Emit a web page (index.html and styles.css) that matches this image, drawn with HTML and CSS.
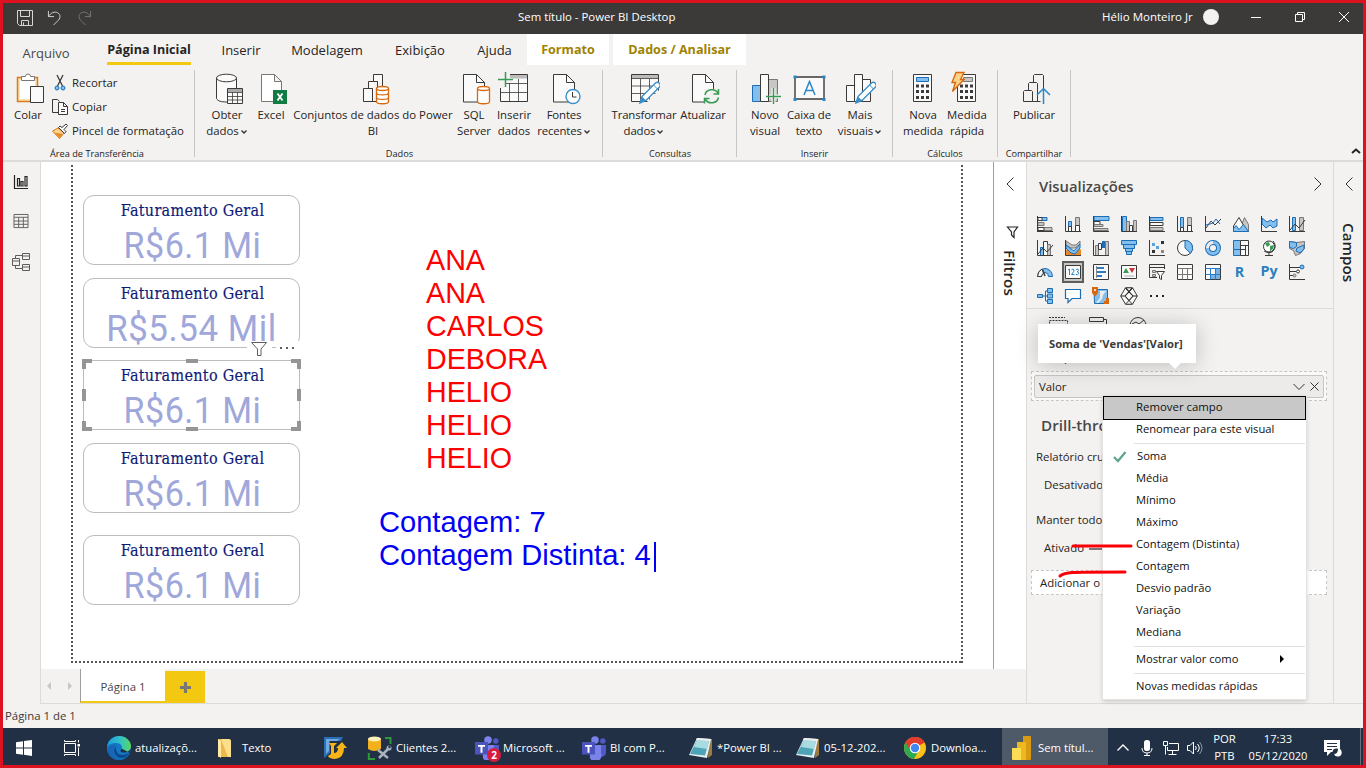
FILE: index.html
```html
<!DOCTYPE html>
<html lang="pt-BR">
<head>
<meta charset="utf-8">
<title>Sem título - Power BI Desktop</title>
<link rel="stylesheet" href="styles.css">
</head>
<body>
<svg class="defs" width="0" height="0">
  <symbol id="doc" viewBox="0 0 32 32"><path class="kw" d="M5.500 2.500h13l8 8v19.500h-21z"/><path class="k" d="M18.500 2.500v8h8"/></symbol>
  <symbol id="pencil" viewBox="0 0 32 32"><path d="M12 31l2-6.500L27.500 11q2-1.500 3.800.3t.2 3.800L18 28.500z" fill="#fff" stroke="#3a8fc8" stroke-width="1.400"/><path d="M12 31l2-6.500 4 4z" fill="#3a8fc8"/><path d="M25.500 13l4 4" stroke="#3a8fc8"/></symbol>
  <symbol id="chev" viewBox="0 0 8 6"><path d="M1.500 1.500L4 4l2.500-2.500" fill="none" stroke="#333" stroke-width="1.400"/></symbol>
  <symbol id="teams" viewBox="0 0 24 24"><circle cx="13" cy="4" r="3.800" fill="#7b83eb"/><circle cx="20.800" cy="5" r="2.700" fill="#5059c9"/><path d="M16 9h8v7.500a4 4 0 0 1-5 4z" fill="#5059c9"/><path d="M7 9h12v8a6 6 0 0 1-11 5z" fill="#7b83eb"/><path d="M0 6h13v12.500H0z" fill="#4b53bc"/><path d="M3 9h7v1.800H7.500v6h-2v-6H3z" fill="#fff"/></symbol>
  <symbol id="note" viewBox="0 0 24 24"><path d="M20 3h3v16l-4 3z" fill="#9c7b43"/><path d="M8 2l14 1-4 19-18-3z" fill="#e8f1f1"/><path d="M8 4l12 1-4 14.500L1 18z" fill="#4da4b6"/><path d="M8 4l12 1-2 8L5 11z" fill="#a9dce2"/><path d="M8 2l14 1-.3 2L7 4z" fill="#eee"/></symbol>
</svg>

<header class="titlebar">
  <svg class="tb-save" viewBox="0 0 16 16"><path class="w" d="M.5.500h15v15h-13l-2-2zM3.500.500v6h9v-6M4.500 15.500v-5h7v5M6.500 12.500v3"/></svg>
  <svg class="tb-undo" viewBox="0 0 16 16"><path class="w" d="M1.500.500v6h6M1.500 6.500C4 2.500 8 .5 11.500 2.500s3 6-.5 9l-4 4"/></svg>
  <svg class="tb-redo" viewBox="0 0 16 16"><path class="w" d="M14.500.500v6h-6M14.500 6.500C12 2.500 8 .5 4.500 2.500s-3 6 .5 9l4 4"/></svg>
  <span class="app-title">Sem título - Power BI Desktop</span>
  <span class="user">Hélio Monteiro Jr</span><span class="avatar"></span>
  <svg class="win" viewBox="0 0 10 10"><path class="w1" d="M0 5.500h10"/></svg>
  <svg class="win" viewBox="0 0 10 10"><path class="w1" d="M.5 2.500h7v7h-7zM2.500 2.500v-2h7v7h-2"/></svg>
  <svg class="win" viewBox="0 0 10 10"><path class="w1" d="M0 0l10 10M10 0L0 10"/></svg>
</header>

<nav class="tabs">
  <span class="tab file">Arquivo</span><span class="tab home">Página Inicial</span><span class="tab ins">Inserir</span><span class="tab mod">Modelagem</span><span class="tab exi">Exibição</span><span class="tab aju">Ajuda</span><span class="tab ctx fmt">Formato</span><span class="tab ctx ana">Dados / Analisar</span>
</nav>

<section class="ribbon">
  <div class="group g1">
    <div class="row">
      <div class="cmd c50"><svg viewBox="0 0 32 32"><path d="M5.500 5.500h20v24h-20z" fill="#fbe3b0" stroke="#d97b18" stroke-width="1.500"/><path d="M8 8h15v19H8z" fill="#fff"/><path d="M9.500 8.500v-4h4q0-2.500 2.500-2.500t2.500 2.500h4v4z" fill="#fff" stroke="#797775"/><path class="kw" d="M18.500 14.500h13v16h-13z"/></svg><span>Colar</span></div>
      <div class="small">
        <div><svg viewBox="0 0 16 16"><path class="k" d="M5 0l5.500 11M11 0L5.500 11" stroke-width="1.300"/><circle cx="5" cy="13" r="2" class="bl"/><circle cx="11" cy="13" r="2" class="bl"/></svg><span>Recortar</span></div>
        <div><svg viewBox="0 0 16 16"><path class="k" d="M6 13.500H.5V.500h5l2 2"/><path class="kw" d="M6.500 3.500h5l4 4v8h-9zM11.500 3.500v4h4M9 10.500h4M9 12.500h4"/></svg><span>Copiar</span></div>
        <div><svg viewBox="0 0 16 16"><path d="M.5 8L6 5l6 5-4.500 5.500z" fill="#fdd28a" stroke="#d97b18"/><path d="M2 9.500l6 5.500 3-4z" fill="#e58a2c"/><path class="kw" d="M6.500 4.500l6 6 1.500-2-2-2 3.500-4-1.500-1.500-4 3.500-2-1.500z"/></svg><span>Pincel de formatação</span></div>
      </div>
    </div>
    <div class="glabel">Área de Transferência</div>
  </div>
  <div class="group g2">
    <div class="row">
      <div class="cmd c44"><svg viewBox="0 0 32 32"><path class="kw" d="M5.500 6v20.500c1 2.500 5 3.500 10 3.500s10-1 10-3.500V6"/><ellipse class="kw" cx="15.500" cy="6" rx="10" ry="3.800"/><path class="kw" d="M16.500 16.500h15v15h-15z"/><path d="M17 17h14v3H17z" fill="#aaa"/><path class="k" d="M16.500 20.500h15M16.500 24.500h15M16.500 28h15M21.500 20v11M26.500 20v11" stroke-width=".8"/></svg><span>Obter<br>dados<svg class="chev"><use href="#chev"/></svg></span></div>
      <div class="cmd c44"><svg viewBox="0 0 32 32"><path d="M6.500 2.500h13l7 7v20h-20zM19.500 2.500v7h7" fill="#fff" stroke="#797775"/><path d="M18 18h14v14H18z" fill="#107c41"/><path d="M22.500 21.500l5 7M27.500 21.500l-5 7" stroke="#fff" stroke-width="1.800"/></svg><span>Excel</span></div>
      <div class="cmd c160"><svg viewBox="0 0 32 32"><path class="kw" d="M16.500 2.500h9v27h-9z"/><path class="kw" d="M11.500 9.500h9v20h-9z"/><path d="M17 10h9v19h-9z" fill="#f3f2f1"/><path class="k" d="M20.500 9.500v7M25.500 9.500v6"/><path class="kw" d="M6.500 16.500h9v13h-9z"/><path d="M19.500 16.500v13c0 3 12 3 12 0v-13" fill="#fff" stroke="#d9690c" stroke-width="1.300"/><ellipse cx="25.500" cy="16.500" rx="6" ry="2" fill="#fff" stroke="#d9690c" stroke-width="1.300"/><path d="M19.500 21c0 2.500 12 2.500 12 0M19.500 25.500c0 2.500 12 2.500 12 0" fill="none" stroke="#d9690c" stroke-width="1.300"/></svg><span>Conjuntos de dados do Power<br>BI</span></div>
      <div class="cmd c42"><svg viewBox="0 0 32 32"><use href="#doc"/><path d="M19.500 16.500v13c0 3 12 3 12 0v-13" fill="#fff" stroke="#d9690c" stroke-width="1.300"/><ellipse cx="25.500" cy="16.500" rx="6" ry="2" fill="#fff" stroke="#d9690c" stroke-width="1.300"/></svg><span>SQL<br>Server</span></div>
      <div class="cmd c38"><svg viewBox="0 0 32 32"><path class="kw" d="M2.500 2.500h27v27h-27z"/><path d="M11 3h18v3.500H11z" fill="#bbb"/><path class="k" d="M2.500 11.500h27M2.500 20.500h27M11.500 7v22M20.500 7v22" stroke-width=".8"/><path d="M0 0h12v6h2v5h-6v5H0z" fill="#f3f2f1"/><path d="M0 7.500h15M7.500 0v15" stroke="#399b53" stroke-width="1.500"/></svg><span>Inserir<br>dados</span></div>
      <div class="cmd c62"><svg viewBox="0 0 32 32"><use href="#doc"/><circle cx="25" cy="24.500" r="7" fill="#fff" stroke="#3a8fc8" stroke-width="1.400"/><path class="k" d="M24.500 20v5h4"/></svg><span>Fontes<br>recentes<svg class="chev"><use href="#chev"/></svg></span></div>
    </div>
    <div class="glabel">Dados</div>
  </div>
  <div class="group g3">
    <div class="row">
      <div class="cmd c64"><svg viewBox="0 0 32 32"><path class="kw" d="M3.500 2.500h27v27h-27z"/><path d="M4 3h26v3.500H4z" fill="#bbb"/><path class="k" d="M3.500 6.500h27M3.500 14h27M3.500 21.500h27M12.500 7v22M21.500 7v22" stroke-width=".8"/><path d="M18 31L32 17v15z" fill="#f3f2f1"/><use href="#pencil"/></svg><span>Transformar<br>dados<svg class="chev"><use href="#chev"/></svg></span></div>
      <div class="cmd c54"><svg viewBox="0 0 32 32"><use href="#doc"/><path d="M17 17h15v15H17z" fill="#f3f2f1"/><path d="M18 23a7 6.500 0 0 1 13-2M31.500 17v5h-5M31.500 25.500a7 6.500 0 0 1-13 2M17.500 31.500v-5h5" fill="none" stroke="#399b53" stroke-width="1.500"/></svg><span>Atualizar</span></div>
    </div>
    <div class="glabel">Consultas</div>
  </div>
  <div class="group g4">
    <div class="row">
      <div class="cmd c40"><svg viewBox="0 0 32 32"><path d="M19.500 7.500h9v22h-9z" fill="#c8c6c4" stroke="#797775"/><path d="M3.500 13.500h8v16h-8z" class="bl"/><path class="kw" d="M11.500 2.500h8v27h-8z"/><path d="M20 24.500h12.500M24.500 16v16" stroke="#f3f2f1" stroke-width="4"/><path d="M17 24.500h15M24.500 16v16" stroke="#399b53" stroke-width="1.400"/></svg><span>Novo<br>visual</span></div>
      <div class="cmd c48"><svg viewBox="0 0 32 32"><path class="kw" d="M2 5h29v22H2z" stroke-width="1.400"/><path d="M.5 3.500h3v3h-3zM29.500 3.500h3v3h-3zM.5 26h3v3h-3zM29.500 26h3v3h-3z" fill="#2488cc"/><path d="M11 23L16.500 9.500 22 23M13 18.500h7" fill="none" stroke="#2b88c8" stroke-width="1.500"/></svg><span>Caixa de<br>texto</span></div>
      <div class="cmd c54"><svg viewBox="0 0 32 32"><path class="kw" d="M2.500 13.500h8v16h-8zM18.500 7.500h8v22h-8zM10.500 2.500h8v27h-8z"/><use href="#pencil"/></svg><span>Mais<br>visuais<svg class="chev"><use href="#chev"/></svg></span></div>
    </div>
    <div class="glabel">Inserir</div>
  </div>
  <div class="group g5">
    <div class="row">
      <div class="cmd c44"><svg viewBox="0 0 32 32"><path class="kw" d="M6.500 2.500h18v27h-18z"/><path class="bl" d="M9.500 5.500h12v4h-12z"/><path d="M9 14h13M9 19.500h13M9 25.500h13" stroke="#3b3a39" stroke-width="3" stroke-dasharray="3 2"/></svg><span>Nova<br>medida</span></div>
      <div class="cmd c44"><svg viewBox="0 0 32 32"><path class="kw" d="M6.500 2.500h18v27h-18z"/><path d="M12.500 5.500h9v4h-9z" fill="#c8c6c4" stroke="#797775"/><path d="M9 14h13M9 19.500h13M9 25.500h13" stroke="#3b3a39" stroke-width="3" stroke-dasharray="3 2"/><path d="M5 .5h8L9.500 7.500H13L1.500 19.500l3-9H1z" fill="#fdd28a" stroke="#d9690c" stroke-width="1.400"/></svg><span>Medida<br>rápida</span></div>
    </div>
    <div class="glabel">Cálculos</div>
  </div>
  <div class="group g6">
    <div class="row">
      <div class="cmd c48"><svg viewBox="0 0 32 32"><path class="k" d="M15.500 10v-6.500l1-1h8l1 1v13M10.500 18v-6.500l1-1h7l1 1v18M5.500 29.500v-10l1-1h7l1 1v10zM14.500 29.500h8"/><path d="M25.500 32V17M19 23l6.500-6.500L32 23" fill="none" stroke="#2b88c8" stroke-width="1.500"/></svg><span>Publicar</span></div>
    </div>
    <div class="glabel">Compartilhar</div>
  </div>
  <svg class="collapse" viewBox="0 0 10 6"><path d="M1 5l4-3.500L9 5" fill="none" stroke="#222" stroke-width="2"/></svg>
</section>

<main class="main">
  <aside class="views">
    <svg class="v1" viewBox="0 0 16 16"><path d="M1.500 1v13.500H15M4.500 12V4.500h2V12zM8 12V7.500h2V12zM12 12V2.500h2V12z" fill="none" stroke="#252423" stroke-width="1.200"/></svg>
    <svg class="v2" viewBox="0 0 16 16"><path d="M.5.500h15v14H.500zM.5 3.500h15M.5 7.500h15M.5 11h15M5.500 3.500v11M10.500 3.500v11" fill="none" stroke="#605e5c"/></svg>
    <svg class="v3" viewBox="0 0 18 18"><path d="M.5 5.500h7v7h-7zM.5 8h7M10.500.500h7v6h-7zM10.500 3h7M10.500 11.500h7v6h-7zM10.500 14h7M3.500 5.500v-3h7M3.500 12.500v3h7" fill="none" stroke="#605e5c"/></svg>
  </aside>
  <div class="center">
    <div class="work">
      <div class="canvas">
        <div class="page">
          <div class="cards">
            <article class="card"><h3>Faturamento Geral</h3><p>R$6.1 Mi</p></article>
            <article class="card"><h3>Faturamento Geral</h3><p class="long">R$5.54 Mil</p></article>
            <article class="card sel"><h3>Faturamento Geral</h3><p>R$6.1 Mi</p>
              <svg class="handles" viewBox="0 0 219 72"><path d="M2 10V2h8M209 2h8v8M217 62v8h-8M10 70H2v-8M104 2h12M104 70h12M2 30v12M217 30v12" fill="none" stroke="#979593" stroke-width="4"/></svg>
              <span class="act filt"><svg viewBox="0 0 16 14"><path d="M.5.500h15L10 7v6.500H6.500V7z" fill="#fff" stroke="#605e5c"/></svg></span>
              <span class="act more"><i></i><i></i><i></i></span>
            </article>
            <article class="card"><h3>Faturamento Geral</h3><p>R$6.1 Mi</p></article>
            <article class="card last"><h3>Faturamento Geral</h3><p>R$6.1 Mi</p></article>
          </div>
          <div class="notes">
            <div class="names">ANA<br>ANA<br>CARLOS<br>DEBORA<br>HELIO<br>HELIO<br>HELIO</div>
            <div class="counts">Contagem: 7<br>Contagem Distinta: 4<span class="caret"></span></div>
          </div>
        </div>
      </div>
      <aside class="filters">
        <svg class="ch" viewBox="0 0 8 14"><path d="M7.500.500L1 7l6.500 6.500" fill="none" stroke="#333"/></svg>
        <svg class="fun" viewBox="0 0 12 12"><path d="M.5 1h10L7 6v5.500L4.500 9V6z" fill="none" stroke="#252423" stroke-width="1.200"/></svg>
        <span>Filtros</span>
      </aside>
    </div>
    <div class="pages">
      <div class="arrows"><i class="al"></i><i class="ar"></i></div>
      <div class="ptab">Página 1</div>
      <div class="padd"><svg viewBox="0 0 12 12"><path d="M6 0v12M0 6h12" stroke="#797775" stroke-width="3.500"/></svg></div>
    </div>
  </div>
  <aside class="viz">
    <div class="vhead"><span>Visualizações</span><svg class="ch" viewBox="0 0 8 14"><path d="M.5.500L7 7 .5 13.500" fill="none" stroke="#333"/></svg></div>
    <div class="gallery">
      <svg viewBox="0 0 16 16"><path class="b" d="M1 1.500h9v3H1z"/><path class="wh" d="M1 1.500h4v3H1z"/><path class="g" d="M1 6.500h6v3H1zM1 11.500h14v3H1z"/><path class="wh" d="M1 11.500h6v3H1z"/><path class="k" d="M.5 0v16M0 15.500h16"/></svg>
      <svg viewBox="0 0 16 16"><path class="b" d="M3.500 5.500h3v6h-3z"/><path class="wh" d="M3.500 10.500h3v5h-3z"/><path class="g" d="M10.500 1.500h4v9h-4z"/><path class="wh" d="M10.500 9.500h4v6h-4z"/><path class="k" d="M.5 0v15.500H16"/></svg>
      <svg viewBox="0 0 16 16"><path class="b" d="M1 .5h15v4H1z"/><path class="wh" d="M1 5.500h6v3H1z"/><path class="g" d="M1 8.500h9v2H1zM1 12.500h14v2H1z"/><path class="k" d="M.5 0v15.500H16"/></svg>
      <svg viewBox="0 0 16 16"><path class="b" d="M1.500.500h4v15h-4z"/><path class="g" d="M5.500 5.500h3v10h-3z"/><path class="wh" d="M8.500 9.500h3v6h-3z"/><path class="g" d="M12.500 4.500h3v11h-3z"/><path class="k" d="M.5 0v15.500H16"/></svg>
      <svg viewBox="0 0 16 16"><path class="b" d="M1 1.500h13v3H1z"/><path class="wh" d="M1 6.500h13v3H1z"/><path class="g" d="M1 11.500h13v3H1z"/><path class="k" d="M.5 0v15.500H16"/></svg>
      <svg viewBox="0 0 16 16"><path class="b" d="M3.500 1.500h3v10h-3z"/><path class="wh" d="M3.500 11.500h3v4h-3z"/><path class="g" d="M10.500 1.500h4v9h-4z"/><path class="wh" d="M10.500 9.500h4v6h-4z"/><path class="k" d="M.5 0v15.500H16"/></svg>
      <svg viewBox="0 0 16 16"><path class="k" d="M.5 0v15.500H16M1 12l5-7 4 4 6-6"/><path d="M1 9l4-1 3-1 3-4 4 5" fill="none" stroke="#1b6db5"/></svg>
      <svg viewBox="0 0 16 16"><path class="g" d="M6 15.500l5.500-14 4 7v7z"/><path class="wh" d="M.5 10L6 1.500 12 12v3.500H.500z"/><path class="b" d="M.5 15.500v-3L3 9.500l3 4 4.500-5 5 7z"/></svg>
      <svg viewBox="0 0 16 16"><path class="b" d="M1 2l5 4 4-2 2 2 4-3v7l-4 2-3-3-4 3-4-4z"/><path class="k" d="M.5 0v15.500H16"/></svg>
      <svg viewBox="0 0 16 16"><path class="b" d="M3.500 1.500h3v13h-3z"/><path class="g" d="M10.500 1.500h4v13h-4z"/><path class="k" d="M.5 0v15.500H16M1 14l5-6 4 4 6-8"/></svg>

      <svg viewBox="0 0 16 16"><path class="b" d="M3.500 7.500h3v8h-3z"/><path class="wh" d="M6.500 1.500h4v14h-4z"/><path class="g" d="M10.500 4.500h3v11h-3z"/><path class="k" d="M.5 0v15.500H16M1 14l5-6 4 4 6-7"/></svg>
      <svg viewBox="0 0 16 16"><path d="M1 10l4-3 3 6 6-5 2 2v5H1z" fill="#e58a2c"/><path class="g" d="M1 1l6 4h4l4-4v3l-5 4H6L1 5z"/><path class="b" d="M1 5l5 4 3 2 6-7v4l-5 6-4-1-5-5z"/><path class="k" d="M.5 0v15.500H16"/></svg>
      <svg viewBox="0 0 16 16"><path class="g" d="M2.500 5.500h3v10h-3zM12.500 1.500h3v14h-3z"/><path class="wh" d="M5.500 3.500h3v6h-3z"/><path d="M9 1h3v7H9z" fill="#1b6db5"/><path class="k" d="M.5 0v15.500H16"/></svg>
      <svg viewBox="0 0 16 16"><path class="b" d="M.5.500h15v4h-15zM2.500 4.500h11v4h-11zM4.500 8.500h7v3h-7zM5.500 11.500h5v3h-5z"/></svg>
      <svg viewBox="0 0 16 16"><path class="k" d="M.5 0v15.500H16"/><path d="M3 10h3v3H3zM12 1h3v3h-3z" fill="#333"/><path d="M3 3h3v3H3zM7 6h3v3H7z" fill="#5ba3dc"/><path d="M12 10h3v3h-3z" fill="#888"/></svg>
      <svg viewBox="0 0 16 16"><circle class="wh" cx="8" cy="8" r="7.500"/><path class="b" d="M8 .5a7.500 7.500 0 0 1 5.500 12.800L8 8z"/></svg>
      <svg viewBox="0 0 16 16"><circle cx="8" cy="8" r="5.500" fill="none" stroke="#1b6db5" stroke-width="5"/><circle cx="8" cy="8" r="5.500" fill="none" stroke="#83beec" stroke-width="3"/><path d="M2.500 8A5.500 5.500 0 0 1 8 2.500" fill="none" stroke="#eee" stroke-width="3"/></svg>
      <svg viewBox="0 0 16 16"><path class="b" d="M.5.500h7v9h-7zM.5 9.500h7v6h-7z"/><path class="wh" d="M7.500.500h8v5h-8zM7.500 5.500h5v10h-5zM12.500 5.500h3v10h-3zM7.500 9.500h5"/></svg>
      <svg viewBox="0 0 16 16"><circle cx="8" cy="6.500" r="5.500" fill="#fff" stroke="#333"/><path d="M4 3l4-1 1 3-3 2zM9 6l4-1-1 4-3 2z" fill="#399b53"/><path class="k" d="M12 1q5 6-1 11-4 2-8-1M8 13v2.500M4 15.500h8"/></svg>
      <svg viewBox="0 0 16 16"><path class="g" d="M.5 1.500l7 1 8-1v7l-4 5-5 2-2-5-4-2z"/><path class="b" d="M.5 1.500l7 1v4l-3 2-4-1zM8 8l7-3v4l-4 4-4-2z"/></svg>

      <svg viewBox="0 0 16 16"><path class="b" d="M.5 12.500a7.500 8 0 0 1 15 0h-4a3.500 4 0 0 0-7 0z"/><path class="wh" d="M.5 12.500Q1 7 5 5l2 4q-2.500 1-2.500 3.500z"/><path class="k" d="M8 12L5.500 6" stroke-width="1.500"/></svg>
      <span class="on"><svg viewBox="0 0 16 16"><path class="wh" d="M.5 1.500h15v13H.500z"/><path d="M3 6l1.500-1v6M6.500 6q1.500-2 2.500 0 .5 1-2.500 4.500h3M11 5.500q2.500-1 2.500.8 0 1-1.500 1.400 2 .3 1.800 1.800-.8 1.800-3 1" fill="none" stroke="#2b88c8"/></svg></span>
      <svg viewBox="0 0 16 16"><path class="wh" d="M.5.500h15v15H.500z"/><path d="M4 4h7M4 8h9M4 12h5" stroke="#2b7cc4" stroke-width="2"/><path d="M3.500 2v12" stroke="#888"/></svg>
      <svg viewBox="0 0 16 16"><path class="wh" d="M.5 1.500h15v13H.500z"/><path d="M2 9l3-5 3 5z" fill="#399b53"/><path d="M8 4h6l-3 5z" fill="#d13438"/><path d="M3 12h10" stroke="#aaa"/></svg>
      <svg viewBox="0 0 16 16"><path class="k" d="M8 13.500H.500v-13h15V5M.5 3.500h15" stroke="#777"/><path class="g" d="M3.500 6.500h3v2h-3zM3.500 10.500h3v2h-3z"/><path class="kw" d="M7.500 7.500h8l-3 4v4l-2-1v-3z"/></svg>
      <svg viewBox="0 0 16 16"><path class="wh" d="M.5.500h15v15H.500z"/><path d="M.5 4.500h15M.5 10.500h15M5.500 4.500v11M10.500 4.500v11" stroke="#797775"/></svg>
      <svg viewBox="0 0 16 16"><path class="wh" d="M.5.500h15v15H.500z"/><path d="M5 10h5V4h5v11H5z" fill="#72b2e6"/><path d="M.5 4.500h15M.5 10.500h15M5.500 4.500v11M10.500 4.500v11" stroke="#2b7cc4"/></svg>
      <b class="ltr r">R</b>
      <b class="ltr">Py</b>
      <svg viewBox="0 0 16 16"><path class="k" d="M.5 0v15.500H16M1 3.500h10M1 7.500h6M1 11.500h3"/><circle class="b" cx="13" cy="3" r="2"/><circle class="wh" cx="9" cy="7.500" r="1.500"/><circle class="g" cx="5.500" cy="11.500" r="1.500"/></svg>

      <svg viewBox="0 0 16 16"><path d="M5 8h6M11 3H8.500v10H11" fill="none" stroke="#1b6db5"/><path class="b" d="M.5 6.500h5v3h-5zM10.500.500h5v4h-5zM10.500 6h5v4h-5zM10.500 11.500h5v4h-5z"/></svg>
      <svg viewBox="0 0 16 16"><path d="M.5 1.500h15v9H7l-4 4v-4H.500z" fill="#fff" stroke="#1b6db5" stroke-width="1.200"/></svg>
      <svg class="big" viewBox="0 0 18 18"><path class="b" d="M2 2.500h13.500v14H2.500z"/><path d="M8 4h6l-3 4-1 4-4 4H4l4-5z" fill="#eee"/><path d="M0 0h6v6l-3 3.500L0 6zM14 11h3v6h-5v-3h2z" fill="#d9690c"/><circle cx="3" cy="3" r="1" fill="#fff"/></svg>
      <svg class="big" viewBox="0 0 18 18"><path class="wh" d="M5.500.800L9 4.500 12.500.800 17.300 9l-4.800 8.200L9 13.500l-3.500 3.700L.7 9z"/><path d="M5.500.800L13 9l-4 4.500L5 9 12.500.800M5.500.800h7M5.500 17.200h7M5 9L.7 9M13 9l4.300 0" fill="none" stroke="#252423" stroke-width="1.100"/></svg>
      <span class="dots"><i></i><i></i><i></i></span>
    </div>
    <div class="panes">
      <svg viewBox="0 0 20 16"><path class="k" d="M0 .5h16M.5 3.500h18v12H.500z" stroke-dasharray="2 1"/></svg>
      <svg viewBox="0 0 20 16"><path class="k" d="M.5.500h14v4H.500zM14.500 2.500h3v5h-9v8"/></svg>
      <svg viewBox="0 0 20 16"><circle class="k" cx="9" cy="8.500" r="8"/><path class="k" d="M3 7l4-2 3 2 5-4"/></svg>
    </div>
    <div class="flabel">Campos</div>
    <div class="well"><div class="pill"><span>Valor</span><svg class="pc" viewBox="0 0 12 8"><path d="M.5 1L6 6.500 11.500 1" fill="none" stroke="#333"/></svg><svg class="px" viewBox="0 0 9 9"><path d="M.5.500l8 8M8.500.500l-8 8" stroke="#333"/></svg></div></div>
    <h2>Drill-thro</h2>
    <div class="line l1">Relatório cru</div>
    <div class="line l2">Desativado</div>
    <div class="line l3">Manter todo</div>
    <div class="line l4">Ativado<span class="toggle"></span></div>
    <div class="drop">Adicionar o</div>

    <div class="tip">Soma de 'Vendas'[Valor]</div>
    <div class="menu">
      <div class="hot">Remover campo</div>
      <div class="second">Renomear para este visual</div>
      <hr>
      <div class="chk"><svg viewBox="0 0 14 12"><path d="M1 6l4 4L12.500 1" fill="none" stroke="#5fa58c" stroke-width="2.200"/></svg>Soma</div>
      <div>Média</div><div>Mínimo</div><div>Máximo</div><div>Contagem (Distinta)</div><div>Contagem</div><div>Desvio padrão</div><div>Variação</div><div>Mediana</div>
      <hr>
      <div class="sub">Mostrar valor como<i></i></div>
      <hr>
      <div>Novas medidas rápidas</div>
    </div>
    <svg class="marks" viewBox="0 0 76 36"><path d="M15 6h58M2 36q4-3 12-3.500 8-.5 53-.500" fill="none" stroke="#fb0007" stroke-width="3" stroke-linecap="round"/></svg>
  </aside>
  <aside class="fields"><svg class="ch" viewBox="0 0 8 14"><path d="M7.500.500L1 7l6.500 6.500" fill="none" stroke="#333"/></svg><span>Campos</span></aside>
</main>

<footer class="status">Página 1 de 1</footer>

<div class="taskbar">
  <div class="ico start"><svg viewBox="0 0 16 16"><path d="M0 2.300L7 1.300V7.500H0zM8 1.100L16 0v7.500H8zM0 8.500h7v6.200l-7-1zM8 8.500h8V16l-8-1.200z" fill="#fff"/></svg></div>
  <div class="ico tv"><svg viewBox="0 0 16 16"><path d="M.5 3.500h11v9H.500zM.5 0v1.500h11V0M.5 16v-1.500h11V16M14.500 0v2.500M14.500 7.500V16" fill="none" stroke="#fff"/><path d="M13.500 4h2.500v2.500h-2.500z" fill="#fff"/></svg></div>
  <div class="app"><svg viewBox="0 0 24 24"><defs><linearGradient id="e1" x2="1"><stop stop-color="#1b9de0"/><stop offset=".6" stop-color="#35c5c0"/><stop offset="1" stop-color="#5bd65a"/></linearGradient></defs><circle cx="12" cy="12" r="12" fill="#1577c4"/><path d="M0 11C1 4 6 0 12 0c7 0 12 5 12 10 0 4-3 6-6.500 6-3 0-4.500-1-3-3 1.500-3-1-6-5-6C5 7 1 8.500 0 11z" fill="url(#e1)"/><path d="M9 9c-3 2-4 7-1 11 2 2.500 6 3.500 9 2.800-6 3-14 .2-16.500-7C0 12 4 8 9 9z" fill="#1666b5"/><path d="M9.500 10c-2 4 1 9 6 9 3 0 5-1 7-2.500-3 6-9 7-13 3.500-3.500-3-3-8 0-10z" fill="#0c4a8c"/><path d="M24 12c-1 3-4 5-8 4.500-3-.5-3-2-1.500-4L23 17z" fill="#213043"/></svg><span>atualizaçõ...</span></div>
  <div class="app"><svg viewBox="0 0 24 24"><path d="M4 3h4l1 2h8v16H4z" fill="#e9b94a"/><path d="M7 3h8q2 0 2 2v16h-3z" fill="#fbdf8c"/><path d="M4 3l3 2v17l-3-2z" fill="#ffe9a5"/></svg><span>Texto</span></div>
  <div class="app solo"><svg viewBox="0 0 24 24"><path d="M3 1h19l-2 4H9v12l-6 5z" fill="#2c6fb5"/><path d="M5 3h14l-3 2H8v10l-3 3z" fill="#6faae0"/><path d="M8 7h8l-3 3v7q4 0 4-5h-2l6-6 5 6h-3q0 10-9 11-6-.5-7-3l3-2V10z" fill="#f7b518"/></svg></div>
  <div class="app"><svg viewBox="0 0 24 24"><path d="M0 3v10q6 4 13 0V3z" fill="#f2b11c"/><ellipse cx="6.500" cy="3" rx="6.500" ry="2.500" fill="#fff0b8"/><path d="M17 2h5.500v6M.8 17v6H7" fill="none" stroke="#2f9a3c" stroke-width="2"/><path d="M10 14l10 8M20 13l-9 9" stroke="#aab3bc" stroke-width="2.500"/><circle cx="21" cy="12" r="2.500" fill="#aab3bc"/><circle cx="21.500" cy="11" r="1.200" fill="#213043"/></svg><span>Clientes 2...</span></div>
  <div class="app"><svg viewBox="0 0 24 24"><use href="#teams"/></svg><em class="badge">2</em><span>Microsoft ...</span></div>
  <div class="app"><svg viewBox="0 0 24 24"><use href="#teams"/></svg><span>BI com P...</span></div>
  <div class="app"><svg viewBox="0 0 24 24"><use href="#note"/></svg><span>*Power BI ...</span></div>
  <div class="app"><svg viewBox="0 0 24 24"><use href="#note"/></svg><span>05-12-202...</span></div>
  <div class="app"><svg viewBox="0 0 24 24"><circle cx="12" cy="12" r="11" fill="#fbc116"/><path d="M12 12L2.500 6.500A11 11 0 0 1 21.500 6.500z" fill="#e33b2e"/><path d="M12 12L2.500 6.500A11 11 0 0 0 11 23l5-9z" fill="#2da94f"/><path d="M12 6.500h9.600a11 11 0 0 0-19-.2l4.500 8z" fill="#e33b2e"/><circle cx="12" cy="12" r="5.300" fill="#fff"/><circle cx="12" cy="12" r="4.200" fill="#4285f4"/></svg><span>Downloa...</span></div>
  <div class="app active"><svg viewBox="0 0 24 24"><path d="M13 0h7q1 0 1 1v22q0 1-1 1h-7z" fill="#d79a12"/><path d="M7 6h8q1 0 1 1v17H7z" fill="#edb91f"/><path d="M2 12h8q1 0 1 1v11H3q-1 0-1-1z" fill="#fbdc53"/></svg><span>Sem títul...</span></div>
  <div class="tray">
    <svg class="t1" viewBox="0 0 12 7"><path d="M.5 6.500L6 1l5.500 5.500" fill="none" stroke="#fff" stroke-width="1.300"/></svg>
    <svg class="t2" viewBox="0 0 12 16"><rect x="3" width="6" height="11" rx="2.500" fill="#fff"/><path d="M1 8q0 5 5 5t5-5M6 13v2.500M3 15.500h6" fill="none" stroke="#fff"/></svg>
    <svg class="t3" viewBox="0 0 16 14"><path d="M6 2.500h9.500v7h-11V6M9.500 10v3M5.500 13.500h8M.5.500h4v4h-4zM2.500 4.500v9" fill="none" stroke="#fff"/></svg>
    <svg class="t4" viewBox="0 0 16 14"><path d="M.5 4.500H3L6.500 1v12L3 9.500H.500zM8.500 5q1.500 2 0 4M10.500 3q3.500 4 0 8" fill="none" stroke="#fff"/><path d="M12.500 1q5 6 0 12" fill="none" stroke="#8b96a3"/></svg>
    <div class="two lang">POR<br>PTB</div>
    <div class="two clock">17:33<br>05/12/2020</div>
    <svg class="t5" viewBox="0 0 16 16"><path d="M0 0h16v12H7l-4 4v-4H0z" fill="#fff"/><path d="M3 3.500h10M3 6.500h10M3 9.500h5" stroke="#213043"/><circle cx="12.500" cy="12.500" r="4" fill="#213043"/><path d="M14 8.500a4 4 0 1 1-4 5.500q4 0 4-5.500z" fill="#fff"/></svg>
    <i class="peek"></i>
  </div>
</div>
</body>
</html>
```
FILE: styles.css
```css
* { box-sizing: border-box; }
body {
  margin: 0; width: 1366px; height: 768px; overflow: hidden;
  border: 3px solid #dc1220; background: #f3f2f1; color: #252423;
  font: 11.4px/16px "Open Sans", "Noto Sans", sans-serif;
  display: flex; flex-direction: column;
}
svg { display: block; flex: none; overflow: visible; }
.defs { position: absolute; }
span, div { white-space: nowrap; }
.k { fill: none; stroke: #3b3a39; }
.kw { fill: #fafafa; stroke: #3b3a39; }
.bl { fill: #83beec; stroke: #1b6db5; }
.b { fill: #83beec; stroke: #1b6db5; }
.g { fill: #c8c6c4; stroke: #797775; }
.wh { fill: #fafafa; stroke: #3b3a39; }
.w { fill: none; stroke: #d8d6d4; }
.w1 { fill: none; stroke: #fff; }

/* Title bar */
.titlebar { height: 31px; flex: none; background: #3b3a39; color: #fff; display: flex; align-items: center; padding: 0 14px; }
.tb-save, .tb-undo, .tb-redo { width: 16px; height: 16px; margin-right: 14px; margin-top: -1px; }
.tb-undo { width: 15px; margin-right: 15px; }
.tb-redo { width: 15px; opacity: .4; margin-right: 0; }
.app-title { margin-left: 426px; width: 584px; font-size: 11.4px; padding-bottom: 4px; }
.user { width: 101px; padding-bottom: 4px; font-size: 11.5px; }
.avatar { width: 16px; height: 16px; border-radius: 50%; background: #f3f2f1; margin-top: -3px; }
.win { width: 10px; height: 10px; margin-left: 34px; margin-top: -3px; }
.avatar + .win { margin-left: 32px; }

/* Tabs */
.tabs { height: 31px; flex: none; display: flex; }
.tab { display: flex; justify-content: center; font-size: 13px; line-height: 32px; height: 31px; }
.file { margin-left: 18px; width: 50px; line-height: 38px; color: #494847; }
.home { margin-left: 36px; width: 84px; font-weight: 700; font-size: 12.6px; border-bottom: 3px solid #f2c811; }
.ins { margin-left: 31px; width: 38px; }
.mod { margin-left: 31px; width: 72px; }
.exi { margin-left: 33px; width: 48px; }
.aju { margin-left: 33px; width: 35px; }
.ctx { background: #fff; color: #a08200; font-weight: 700; font-size: 12.6px; }
.fmt { margin-left: 15px; width: 82px; }
.ana { margin-left: 4px; width: 133px; }

/* Ribbon */
.ribbon { height: 97px; flex: none; display: flex; padding-top: 5px; border-bottom: 2px solid #dcdbda; }
.group { height: 87px; border-right: 1px solid #c8c6c4; }
.g1 { width: 192px; }
.g2 { width: 408px; padding-left: 10px; }
.g3 { width: 134px; padding-left: 9px; }
.g4 { width: 156px; padding-left: 8px; }
.g5 { width: 105px; padding-left: 8px; }
.g6 { width: 73px; padding-left: 12px; }
.row { height: 76px; display: flex; padding-top: 2px; }
.cmd { display: flex; flex-direction: column; align-items: center; text-align: center; }
.cmd > svg { width: 32px; height: 32px; margin-bottom: 3px; }
.g3 .cmd, .c62, .c48 { letter-spacing: -.15px; }
.c38 { width: 38px; } .c40 { width: 40px; } .c42 { width: 42px; } .c44 { width: 44px; } .c48 { width: 48px; }
.c50 { width: 50px; } .c54 { width: 54px; } .c62 { width: 62px; } .c64 { width: 64px; } .c160 { width: 160px; }
.chev { display: inline-block; width: 8px; height: 6px; margin-left: 1px; }
.small { display: grid; grid-template-rows: 24px 24px 24px; margin: -1px 0 0 -1px; }
.small > div { display: flex; align-items: center; gap: 4px; }
.small svg { width: 16px; height: 16px; }
.glabel { text-align: center; font-size: 9.2px; line-height: 15px; color: #252423; }
.g1 .glabel { margin-left: -3px; }
.g2 .glabel, .g3 .glabel, .g4 .glabel, .g5 .glabel { margin-left: -8px; }
.g6 .glabel { margin-left: -12px; }
.collapse { width: 10px; height: 6px; margin: 78px 0 0 280px; }

/* Work area */
.main { height: 542px; flex: none; display: flex; }
.views { width: 38px; border-right: 1px solid #dcdbda; display: flex; flex-direction: column; align-items: center; padding-right: 2px; }
.v1 { width: 16px; height: 16px; margin-top: 12px; }
.v2 { width: 16px; height: 15px; margin-top: 24px; }
.v3 { width: 18px; height: 18px; margin-top: 24px; }
.center { width: 986px; display: flex; flex-direction: column; }
.work { height: 507px; display: flex; }
.canvas { width: 952px; background: #fff; padding: 3px 0 0 30px; }
.page {
  width: 892px; height: 498px; display: flex; padding: 30px 0 0 12px;
  background:
    repeating-linear-gradient(180deg, #555 0 2px, transparent 2px 4px) left / 2px 100% no-repeat,
    repeating-linear-gradient(180deg, #555 0 2px, transparent 2px 4px) right / 2px 100% no-repeat,
    repeating-linear-gradient(90deg, #555 0 2px, transparent 2px 4px) bottom / 100% 2px no-repeat;
}
.cards { width: 217px; }
.card { position: relative; height: 70px; border: 1px solid #bebcba; border-radius: 11px; margin-bottom: 13px; text-align: center; }
.card:nth-child(2) { margin-bottom: 12px; }
.card:nth-child(4) { margin-bottom: 22px; }
.sel { border-radius: 0; }
.card h3 { margin: 4px 0 0 2px; font: 16px/22px "DejaVu Serif Condensed", "DejaVu Serif", serif; font-stretch: condensed; letter-spacing: .3px; color: #0f1a78; -webkit-text-stroke: .15px #0f1a78; }
.card p { margin: 2px 0 0 2px; font: 37.5px/42px Roboto, sans-serif; color: #a0a7db; transform: scaleX(.91); letter-spacing: .5px; white-space: nowrap; }
.card .long { margin-left: 0; transform: scaleX(.93); letter-spacing: .6px; }
.handles { position: absolute; left: -2px; top: -2px; width: 219px; height: 72px; }
.act { position: absolute; background: #fff; height: 17px; top: -20px; }
.filt { left: 163px; width: 25px; padding: 1px 4px; }
.filt svg { width: 16px; height: 14px; }
.more { left: 192px; width: 26px; display: flex; gap: 4px; padding: 6px 4px; }
.more i { width: 2px; height: 2px; background: #605e5c; }
.notes { font: 28.7px/33px "Liberation Sans", Arial, sans-serif; margin: 49px 0 0 79px; }
.names { color: #ff0000; margin-left: 47px; }
.counts { color: #0000f5; margin: 31px 0 0; font-size: 29.1px; }
.caret { display: inline-block; width: 2px; height: 30px; background: #0000f5; vertical-align: -7px; margin-left: 3px; }

.filters { width: 34px; background: #fff; border-left: 1px solid #a19f9d; border-right: 1px solid #dcdbda; display: flex; flex-direction: column; align-items: center; padding-top: 15px; }
.ch { width: 8px; height: 14px; }
.fun { width: 12px; height: 12px; margin: 35px 0 0 5px; }
.filters span, .fields span { writing-mode: vertical-rl; font-weight: 600; font-size: 15.2px; line-height: 18px; color: #252423; }
.filters span { margin: 12px 0 0 0; }
.pages { height: 35px; display: flex; border-bottom: 1px solid #dcdbda; border-right: 1px solid #dcdbda; }
.arrows { width: 39px; display: flex; align-items: center; gap: 17px; padding-left: 6px; }
.al, .ar { border: 4px solid transparent; border-left: 0; border-right: 4px solid #c8c6c4; }
.ar { border-right: 0; border-left: 4px solid #c8c6c4; }
.ptab { width: 85px; border-left: 1px solid #a19f9d; background: #fff; border-bottom: 2px solid #f2c811; text-align: center; line-height: 35px; color: #494847; }
.padd { width: 40px; height: 32px; margin-top: 2px; background: #f2c811; display: grid; place-items: center; }
.padd svg { width: 11px; height: 11px; }

/* Visualizations pane */
.viz { position: relative; width: 307px; border-right: 1px solid #dcdbda; border-bottom: 1px solid #dcdbda; }
.vhead { display: flex; height: 48px; padding: 15px 11px 0 12px; justify-content: space-between; font-size: 14.8px; font-weight: 600; line-height: 19px; color: #494847; }
.gallery { display: grid; grid-template-columns: repeat(10, 28px); grid-auto-rows: 24px; padding: 2px 0 0 4px; height: 99px; border-bottom: 1px solid #dcdbda; justify-items: center; align-items: center; }
.gallery svg { width: 16px; height: 16px; }
.gallery .big { width: 18px; height: 18px; }
.on { width: 22px; height: 22px; border: 2px solid #605e5c; background: #c8c6c4; padding: 1px; }
.ltr { color: #2b80bd; font-size: 14.3px; line-height: 16px; margin-top: -2px; }
.ltr.r { margin-right: 3px; margin-top: 0; }
.dots { display: flex; gap: 4px; }
.dots i { width: 2px; height: 2px; background: #252423; }
.panes { display: flex; gap: 20px; padding: 8px 0 0 22px; height: 41px; }
.panes svg { width: 20px; height: 16px; }
.flabel { padding-left: 13px; height: 22px; line-height: 14px; }
.well { width: 296px; height: 30px; margin-left: 4px; border: 1px dashed #c8c6c4; background: #faf9f8; padding: 3px 2px; margin-top: -1px; }
.pill { height: 23px; border: 1px solid #c8c6c4; border-radius: 2px; background: #edebe9; display: flex; align-items: center; padding-left: 4px; }
.pill span { width: 254px; }
.pc { width: 12px; height: 8px; margin-right: 5px; }
.px { width: 9px; height: 9px; }
.viz h2 { margin: 14px 0 0 14px; font-size: 15.2px; font-weight: 600; line-height: 20px; color: #494847; }
.line { padding-left: 9px; height: 16px; }
.l1 { margin-top: 14px; }
.l2 { margin-top: 12px; padding-left: 17px; }
.l3 { margin-top: 19px; }
.l4 { margin-top: 12px; padding-left: 17px; display: flex; align-items: center; }
.toggle { width: 17px; height: 2px; margin: 2px 0 0 5px; background: #797775; }
.drop { width: 296px; height: 25px; margin: 14px 0 0 4px; padding-left: 8px; line-height: 23px; background: #fff; border: 1px dashed #c8c6c4; }
.tip { position: absolute; left: 11px; top: 162px; width: 158px; height: 39px; background: #fff; font-weight: 700; font-size: 11.2px; line-height: 39px; padding-left: 11px; color: #3b3a39; box-shadow: 0 2px 22px rgba(0,0,0,.22); }
.tip::after { content: ""; position: absolute; left: 131px; top: 39px; border: 6px solid transparent; border-top-color: #fff; border-bottom: 0; }
.menu { position: absolute; left: 76px; top: 234px; width: 203px; height: 303px; background: #fff; color: #111; box-shadow: 0 0 0 1px #e3e2e1, 0 2px 5px rgba(0,0,0,.2); font-size: 11.2px; }
.menu div { height: 22px; line-height: 22px; padding-left: 33px; }
.menu .hot { height: 24px; line-height: 20px; padding-left: 32px; border: 1px solid #000; background: #c8c8c8; font-size: 11.4px; }
.menu .second { height: 20px; line-height: 18px; }
.menu hr { height: 1px; border: 0; background: #e1e1e1; margin: 3px 1px 1px 31px; }
.menu .chk { display: flex; align-items: center; padding-left: 10px; }
.chk svg { width: 14px; height: 12px; margin: 2px 10px 0 0; }
.menu .sub { display: flex; align-items: center; }
.sub i { border: 4px solid transparent; border-right: 0; border-left: 4px solid #000; margin-left: auto; margin-right: 22px; }
.marks { position: absolute; left: 31px; top: 378px; width: 76px; height: 36px; }

.fields { width: 29px; padding-top: 15px; display: flex; flex-direction: column; align-items: center; border-bottom: 1px solid #dcdbda; }
.fields span { margin-top: 32px; }

.status { height: 24px; flex: none; padding-left: 2px; line-height: 24px; color: #3b3a39; }

/* Taskbar */
.taskbar { height: 37px; flex: none; background: #213044; color: #fff; display: flex; font-size: 11.3px; }
.ico { display: grid; place-items: center; padding-top: 2px; }
.ico svg { width: 16px; height: 16px; }
.start { width: 43px; padding-right: 2px; } .tv { width: 53px; padding-right: 1px; }
.app { position: relative; width: 107px; padding: 2px 0 0 8px; display: flex; align-items: center; gap: 4px; }
.app > svg { width: 24px; height: 24px; }
.app.solo { width: 47px; }
.app.active { background: #4f5a69; width: 106px; }
.badge { position: absolute; left: 20px; top: 20px; width: 14px; height: 14px; border-radius: 50%; background: #d51c3c; font: 700 10px/14px "Open Sans", sans-serif; text-align: center; }
.tray { display: flex; align-items: center; padding-top: 2px; }
.t1 { width: 12px; height: 7px; margin-left: 9px; }
.t2 { width: 12px; height: 16px; margin-left: 12px; }
.t3 { width: 16px; height: 14px; margin-left: 10px; }
.t4 { width: 16px; height: 14px; margin-left: 8px; }
.two { line-height: 17px; text-align: center; margin-top: -1px; }
.lang { width: 43px; }
.clock { width: 64px; font-size: 11.1px; }
.t5 { width: 16px; height: 16px; margin-left: 14px; }
.peek { width: 1px; height: 37px; background: #66717e; margin: -2px 0 0 20px; }
```
